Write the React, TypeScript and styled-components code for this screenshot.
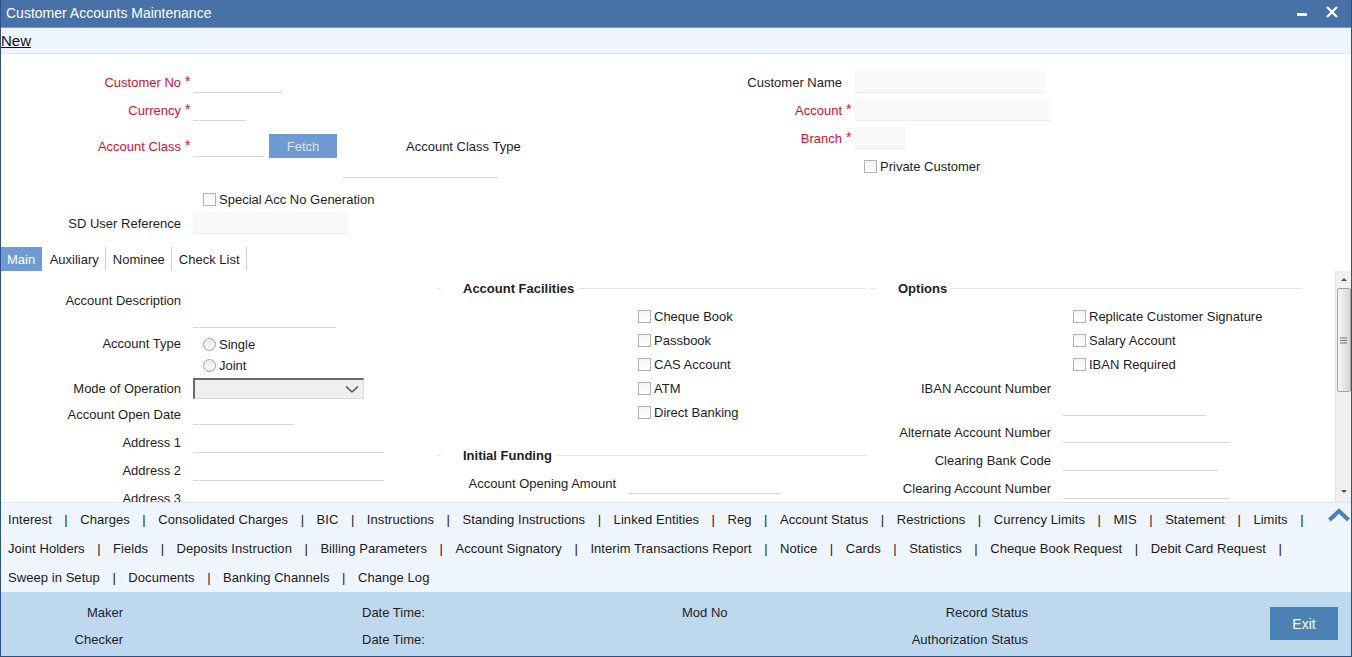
import React from 'react';
import styled, { createGlobalStyle } from 'styled-components';

const GlobalStyle = createGlobalStyle`
  html, body { margin: 0; padding: 0; background: #fff; }
  body { font-family: "Liberation Sans", Arial, sans-serif; font-size: 13px; color: #1e1e1e; }
  * { box-sizing: border-box; }
`;

const Window = styled.div`
  width: 1352px;
  height: 657px;
  display: flex;
  flex-direction: column;
  border: 1px solid #2c5189;
  border-top: none;
  overflow: hidden;
  background: #fff;
`;

const TitleBar = styled.div`
  height: 28px;
  flex-shrink: 0;
  background: #4871a7;
  border-bottom: 1px solid #8099b9;
  color: #fff;
  font-size: 14px;
  display: flex;
  align-items: center;
  justify-content: space-between;
  padding: 0 13px 0 5px;
`;

const TitleText = styled.span`
  line-height: 1;
  margin-top: -2px;
`;

const WinControls = styled.div`
  display: flex;
  align-items: center;
  gap: 19px;
  margin-top: -4px;
`;

const Toolbar = styled.div`
  height: 26px;
  flex-shrink: 0;
  background: #eef5fd;
  border-bottom: 1px solid #dfe6ee;
  display: flex;
  align-items: center;
`;

const NewLink = styled.a`
  font-size: 15px;
  color: #111;
  text-decoration: underline;
  cursor: pointer;
`;

const Header = styled.div`
  height: 193px;
  flex-shrink: 0;
  display: flex;
`;

const HeaderCol = styled.div<{ $w?: number }>`
  display: flex;
  flex-direction: column;
  width: ${p => (p.$w ? `${p.$w}px` : 'auto')};
  flex: ${p => (p.$w ? '0 0 auto' : '1')};
`;

const Row = styled.div<{ $h: number; $mt?: number; $pl?: number; $top?: boolean }>`
  display: flex;
  align-items: ${p => (p.$top ? 'flex-start' : 'center')};
  height: ${p => p.$h}px;
  margin-top: ${p => p.$mt ?? 0}px;
  padding-left: ${p => p.$pl ?? 0}px;
  flex-shrink: 0;
`;

const Label = styled.label<{ $w?: number; $req?: boolean; $lh?: number }>`
  width: ${p => p.$w ?? 180}px;
  flex-shrink: 0;
  text-align: right;
  white-space: nowrap;
  color: ${p => (p.$req ? '#d0102b' : '#1e1e1e')};
  line-height: ${p => (p.$lh ? `${p.$lh}px` : 'normal')};
`;

const Req = styled.span`
  width: 12px;
  flex-shrink: 0;
  color: #d0102b;
  font-size: 14px;
  padding-left: 4px;
  transform: translateY(-1px);
`;

const Gap = styled.span<{ $w: number }>`
  width: ${p => p.$w}px;
  flex-shrink: 0;
`;

const TextInput = styled.input<{ $w: number; $h?: number; $ro?: boolean }>`
  width: ${p => p.$w}px;
  height: ${p => p.$h ?? 22}px;
  flex-shrink: 0;
  border: none;
  border-bottom: 1px solid ${p => (p.$ro ? '#ececec' : '#d6d6d6')};
  background: ${p => (p.$ro ? '#f9f9f9' : 'transparent')};
  padding: 0 3px;
  font: inherit;
  outline: none;
`;

const FetchButton = styled.button`
  width: 68px;
  height: 24px;
  margin-left: 5px;
  flex-shrink: 0;
  border: none;
  background: #6f9bd2;
  color: #d9e4f1;
  font: inherit;
  font-size: 13px;
`;

const PlainText = styled.span<{ $ml?: number }>`
  margin-left: ${p => p.$ml ?? 0}px;
  white-space: nowrap;
`;

const CheckBox = styled.span`
  width: 13px;
  height: 13px;
  flex-shrink: 0;
  border: 1px solid #b3b3b3;
  background: linear-gradient(#f4f4f4, #ffffff);
  margin-right: 3px;
`;

const Radio = styled.span`
  width: 13px;
  height: 13px;
  flex-shrink: 0;
  border: 1px solid #a3a3a3;
  border-radius: 50%;
  background: linear-gradient(#ececec, #fbfbfb);
  margin-right: 3px;
`;

const CheckItem = styled.div<{ $h?: number; $pl?: number }>`
  display: flex;
  align-items: center;
  height: ${p => p.$h ?? 24}px;
  padding-left: ${p => p.$pl ?? 0}px;
  white-space: nowrap;
`;

const RadioGroup = styled.div`
  display: flex;
  flex-direction: column;
  padding-left: 22px;
`;

const SelectBox = styled.div`
  width: 171px;
  height: 21px;
  flex-shrink: 0;
  background: #efefef;
  border-top: 2px solid #6a6a6a;
  border-left: 2px solid #6a6a6a;
  border-right: 1px solid #dcdcdc;
  border-bottom: 1px solid #dcdcdc;
  display: flex;
  align-items: center;
  justify-content: flex-end;
  padding-right: 4px;
`;

const Tabs = styled.div`
  height: 24px;
  flex-shrink: 0;
  display: flex;
  align-items: stretch;
`;

const Tab = styled.div<{ $active?: boolean }>`
  display: flex;
  align-items: center;
  padding: 0 ${p => (p.$active ? '6px' : '6.5px')};
  background: ${p => (p.$active ? '#6e9bd2' : 'transparent')};
  color: ${p => (p.$active ? '#fff' : '#1e1e1e')};
  border-right: 1px solid ${p => (p.$active ? '#6e9bd2' : '#cfcfcf')};
  margin-right: ${p => (p.$active ? '1px' : '0')};
`;

const Content = styled.div`
  height: 231px;
  flex-shrink: 0;
  display: flex;
  overflow: hidden;
`;

const ContentGrid = styled.div`
  flex: 1;
  display: grid;
  grid-template-columns: 436px 433px 1fr;
  overflow: hidden;
`;

const Column = styled.div<{ $pr?: number }>`
  display: flex;
  flex-direction: column;
  padding-right: ${p => p.$pr ?? 0}px;
  min-width: 0;
`;

const SectionHead = styled.div<{ $mt: number; $stub: number }>`
  display: flex;
  align-items: center;
  height: 18px;
  margin-top: ${p => p.$mt}px;
  flex-shrink: 0;
  &::before {
    content: '';
    width: ${p => p.$stub}px;
    height: 1px;
    background: #e6e6e6;
  }
  &::after {
    content: '';
    flex: 1;
    height: 1px;
    background: #e6e6e6;
  }
`;

const SectionTitle = styled.span`
  font-weight: bold;
  margin: 0 4px 0 22px;
  white-space: nowrap;
`;

const CheckList = styled.div<{ $mt: number; $pl: number }>`
  display: flex;
  flex-direction: column;
  margin-top: ${p => p.$mt}px;
  padding-left: ${p => p.$pl}px;
`;

const Scrollbar = styled.div`
  width: 16px;
  flex-shrink: 0;
  background: #f0f0f0;
  border-left: 1px solid #e4e4e4;
  display: flex;
  flex-direction: column;
  align-items: center;
  padding-bottom: 2px;
`;

const ScrollArrow = styled.div<{ $down?: boolean }>`
  height: 17px;
  width: 100%;
  display: flex;
  align-items: center;
  justify-content: center;
  &::after {
    content: '';
    border-left: 3px solid transparent;
    border-right: 3px solid transparent;
    ${p => (p.$down ? 'border-top: 3px solid #555;' : 'border-bottom: 3px solid #555;')}
  }
`;

const ScrollThumb = styled.div`
  width: 14px;
  height: 104px;
  border: 1px solid #a2a2a2;
  border-radius: 2px;
  background: linear-gradient(90deg, #f6f6f6, #e2e2e2 60%, #d8d8d8);
  display: flex;
  align-items: center;
  justify-content: center;
`;

const ScrollSpacer = styled.div`
  flex: 1;
`;

const LinksPanel = styled.div`
  height: 90px;
  flex-shrink: 0;
  background: #eef5fd;
  border-top: 1px solid #dfe6ee;
  display: flex;
  padding: 2px 0 0 7px;
`;

const LinkRows = styled.div`
  flex: 1;
  display: flex;
  flex-direction: column;
`;

const LinkRow = styled.div`
  height: 29px;
  display: flex;
  align-items: center;
  white-space: nowrap;
  letter-spacing: 0.06px;
`;

const LinkItem = styled.span`
  color: #1a1a1a;
  cursor: pointer;
`;

const Sep = styled.span`
  padding: 0 12.5px;
  color: #1a1a1a;
`;

const CollapseIcon = styled.div`
  width: 24px;
  height: 18px;
  margin-top: 2px;
  flex-shrink: 0;
`;

const Footer = styled.div`
  flex: 1;
  background: #bed9ee;
  display: grid;
  grid-template-columns: 122px 239px 320px 200px 146px 1fr;
  grid-template-rows: 27px 27px;
  align-content: start;
  padding-top: 7px;
`;

const FootLabel = styled.span<{ $right?: boolean; $col: number; $row: number }>`
  grid-column: ${p => p.$col};
  grid-row: ${p => p.$row};
  text-align: ${p => (p.$right ? 'right' : 'left')};
  align-self: center;
  white-space: nowrap;
`;

const ExitButton = styled.button`
  grid-column: 6;
  grid-row: 1 / span 2;
  justify-self: end;
  align-self: start;
  margin: 8px 13px 0 0;
  width: 68px;
  height: 33px;
  border: none;
  background: #4a82b4;
  color: #fff;
  font: inherit;
  font-size: 14px;
`;

const linkRows: string[][] = [
  ['Interest', 'Charges', 'Consolidated Charges', 'BIC', 'Instructions', 'Standing Instructions', 'Linked Entities', 'Reg', 'Account Status', 'Restrictions', 'Currency Limits', 'MIS', 'Statement', 'Limits'],
  ['Joint Holders', 'Fields', 'Deposits Instruction', 'Billing Parameters', 'Account Signatory', 'Interim Transactions Report', 'Notice', 'Cards', 'Statistics', 'Cheque Book Request', 'Debit Card Request'],
  ['Sweep in Setup', 'Documents', 'Banking Channels', 'Change Log'],
];

const Check = ({ label, pl, h }: { label: string; pl?: number; h?: number }) => (
  <CheckItem $pl={pl} $h={h}>
    <CheckBox />
    {label}
  </CheckItem>
);

export default function App() {
  return (
    <>
      <GlobalStyle />
      <Window>
        <TitleBar>
          <TitleText>Customer Accounts Maintenance</TitleText>
          <WinControls>
            <svg width="10" height="10" viewBox="0 0 10 10">
              <rect x="0" y="6" width="10" height="3" fill="#fff" />
            </svg>
            <svg width="12" height="12" viewBox="0 0 12 12">
              <path d="M1 1 L11 11 M11 1 L1 11" stroke="#fff" strokeWidth="2.2" />
            </svg>
          </WinControls>
        </TitleBar>
        <Toolbar>
          <NewLink>New</NewLink>
        </Toolbar>

        <Header>
          <HeaderCol $w={699}>
            <Row $h={28} $mt={14}>
              <Label $req>Customer No</Label>
              <Req>*</Req>
              <TextInput $w={89} />
            </Row>
            <Row $h={28}>
              <Label $req>Currency</Label>
              <Req>*</Req>
              <TextInput $w={53} />
            </Row>
            <Row $h={28} $mt={8}>
              <Label $req>Account Class</Label>
              <Req>*</Req>
              <TextInput $w={71} />
              <FetchButton>Fetch</FetchButton>
              <PlainText $ml={69}>Account Class Type</PlainText>
            </Row>
            <Row $h={20} $pl={342} $top>
              <TextInput $w={155} $h={18} />
            </Row>
            <Row $h={22} $mt={8} $pl={202}>
              <Check label="Special Acc No Generation" h={22} />
            </Row>
            <Row $h={24} $mt={1}>
              <Label>SD User Reference</Label>
              <Gap $w={12} />
              <TextInput $w={155} $ro />
            </Row>
          </HeaderCol>
          <HeaderCol>
            <Row $h={28} $mt={14}>
              <Label $w={142}>Customer Name</Label>
              <Gap $w={12} />
              <TextInput $w={191} $ro />
            </Row>
            <Row $h={28}>
              <Label $w={142} $req>Account</Label>
              <Req>*</Req>
              <TextInput $w={197} $ro />
            </Row>
            <Row $h={28}>
              <Label $w={142} $req>Branch</Label>
              <Req>*</Req>
              <TextInput $w={52} $ro />
            </Row>
            <Row $h={28} $pl={164}>
              <Check label="Private Customer" h={28} />
            </Row>
          </HeaderCol>
        </Header>

        <Tabs>
          <Tab $active>Main</Tab>
          <Tab>Auxiliary</Tab>
          <Tab>Nominee</Tab>
          <Tab>Check List</Tab>
        </Tabs>

        <Content>
          <ContentGrid>
            <Column>
              <Row $h={42} $mt={15} $top>
                <Label $lh={29}>Account Description</Label>
                <Gap $w={12} />
                <TextInput $w={143} $h={42} />
              </Row>
              <Row $h={42} $mt={5} $top>
                <Label $lh={22}>Account Type</Label>
                <RadioGroup>
                  <CheckItem $h={22}><Radio />Single</CheckItem>
                  <CheckItem $h={20}><Radio />Joint</CheckItem>
                </RadioGroup>
              </Row>
              <Row $h={23} $mt={2}>
                <Label>Mode of Operation</Label>
                <Gap $w={12} />
                <SelectBox>
                  <svg width="14" height="9" viewBox="0 0 14 9">
                    <path d="M1 1.5 L7 7 L13 1.5" fill="none" stroke="#555" strokeWidth="1.6" />
                  </svg>
                </SelectBox>
              </Row>
              <Row $h={28}>
                <Label>Account Open Date</Label>
                <Gap $w={12} />
                <TextInput $w={101} />
              </Row>
              <Row $h={28}>
                <Label>Address 1</Label>
                <Gap $w={12} />
                <TextInput $w={191} />
              </Row>
              <Row $h={28}>
                <Label>Address 2</Label>
                <Gap $w={12} />
                <TextInput $w={191} />
              </Row>
              <Row $h={28}>
                <Label>Address 3</Label>
                <Gap $w={12} />
                <TextInput $w={191} />
              </Row>
            </Column>

            <Column $pr={3}>
              <SectionHead $mt={8} $stub={4}>
                <SectionTitle>Account Facilities</SectionTitle>
              </SectionHead>
              <CheckList $mt={7} $pl={201}>
                <Check label="Cheque Book" />
                <Check label="Passbook" />
                <Check label="CAS Account" />
                <Check label="ATM" />
                <Check label="Direct Banking" />
              </CheckList>
              <SectionHead $mt={22} $stub={4}>
                <SectionTitle>Initial Funding</SectionTitle>
              </SectionHead>
              <Row $h={28} $mt={5}>
                <Label $w={179}>Account Opening Amount</Label>
                <Gap $w={12} />
                <TextInput $w={153} />
              </Row>
            </Column>

            <Column $pr={33}>
              <SectionHead $mt={8} $stub={6}>
                <SectionTitle>Options</SectionTitle>
              </SectionHead>
              <CheckList $mt={7} $pl={203}>
                <Check label="Replicate Customer Signature" />
                <Check label="Salary Account" />
                <Check label="IBAN Required" />
              </CheckList>
              <Row $h={42} $top>
                <Label $w={181} $lh={26}>IBAN Account Number</Label>
                <Gap $w={12} />
                <TextInput $w={143} $h={40} />
              </Row>
              <Row $h={28}>
                <Label $w={181}>Alternate Account Number</Label>
                <Gap $w={12} />
                <TextInput $w={167} />
              </Row>
              <Row $h={28}>
                <Label $w={181}>Clearing Bank Code</Label>
                <Gap $w={12} />
                <TextInput $w={155} />
              </Row>
              <Row $h={28}>
                <Label $w={181}>Clearing Account Number</Label>
                <Gap $w={12} />
                <TextInput $w={167} />
              </Row>
            </Column>
          </ContentGrid>
          <Scrollbar>
            <ScrollArrow />
            <ScrollThumb>
              <svg width="7" height="7" viewBox="0 0 7 7">
                <path d="M0 1 H7 M0 3.5 H7 M0 6 H7" stroke="#777" strokeWidth="1" />
              </svg>
            </ScrollThumb>
            <ScrollSpacer />
            <ScrollArrow $down />
          </Scrollbar>
        </Content>

        <LinksPanel>
          <LinkRows>
            {linkRows.map((row, ri) => (
              <LinkRow key={ri}>
                {row.map((item, i) => (
                  <React.Fragment key={item}>
                    <LinkItem>{item}</LinkItem>
                    {(i < row.length - 1 || ri < linkRows.length - 1) && <Sep>|</Sep>}
                  </React.Fragment>
                ))}
              </LinkRow>
            ))}
          </LinkRows>
          <CollapseIcon>
            <svg width="24" height="16" viewBox="0 0 24 16">
              <path d="M2.5 13 L12 4 L21.5 13" fill="none" stroke="#4a80c2" strokeWidth="4" strokeLinejoin="miter" />
            </svg>
          </CollapseIcon>
        </LinksPanel>

        <Footer>
          <FootLabel $col={1} $row={1} $right>Maker</FootLabel>
          <FootLabel $col={3} $row={1}>Date Time:</FootLabel>
          <FootLabel $col={4} $row={1}>Mod No</FootLabel>
          <FootLabel $col={5} $row={1} $right>Record Status</FootLabel>
          <FootLabel $col={1} $row={2} $right>Checker</FootLabel>
          <FootLabel $col={3} $row={2}>Date Time:</FootLabel>
          <FootLabel $col={5} $row={2} $right>Authorization Status</FootLabel>
          <ExitButton>Exit</ExitButton>
        </Footer>
      </Window>
    </>
  );
}
